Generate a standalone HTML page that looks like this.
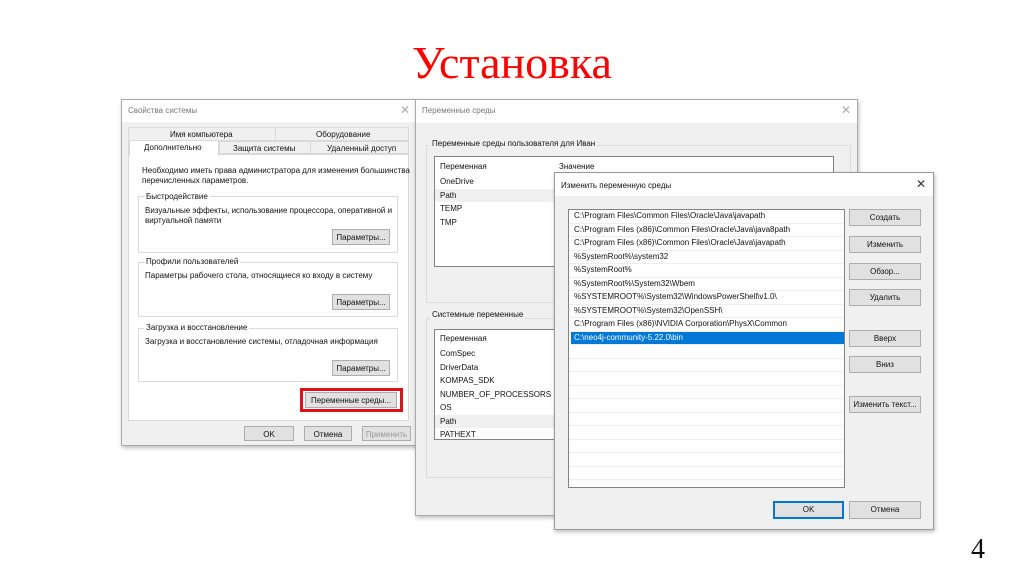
<!DOCTYPE html>
<html><head><meta charset="utf-8"><style>
*{margin:0;padding:0;box-sizing:border-box}
body{width:1024px;height:574px;background:#fff;position:relative;overflow:hidden;font-family:"Liberation Sans","DejaVu Sans",sans-serif;font-size:8px;color:#111}
.a{position:absolute}
.dlg{position:absolute;background:#f0f0f0;border:1px solid #aaa;box-shadow:1px 2px 4px rgba(0,0,0,.25)}
.tb{position:absolute;left:0;right:0;top:0;background:#fff}
.btn{position:absolute;background:#e1e1e1;border:1px solid #adadad;text-align:center;font-size:8px;line-height:15px}
.grp{position:absolute;border:1px solid #dcdcdc}
.lab{position:absolute;background:#f0f0f0;padding:0 2px;font-size:8px}
.list{position:absolute;background:#fff;border:1px solid #828282}
.x{position:absolute;font-size:12px;color:#555;font-weight:100}
</style></head><body>
<div class="a" style="left:0;width:1024px;top:36px;text-align:center;font-family:'Liberation Serif',serif;font-size:46px;color:#f00;line-height:54px">Установка</div>
<div class="a" style="left:971px;top:533px;font-family:'Liberation Serif',serif;font-size:28px;line-height:34px">4</div>

<!-- dialog 1 -->
<div class="dlg" style="left:121px;top:99px;width:297px;height:347px">
 <div class="tb" style="height:22px"><span class="a" style="left:6px;top:6px;color:#777">Свойства системы</span><span class="x" style="left:278px;top:3px;color:#aaa">✕</span></div>
 <div class="a" style="left:6px;top:27px;width:281px;height:14px;background:#f0f0f0;border:1px solid #d9d9d9"></div>
 <div class="a" style="left:153px;top:27px;width:1px;height:14px;background:#d9d9d9"></div>
 <span class="a" style="left:48px;top:30px">Имя компьютера</span>
 <span class="a" style="left:194px;top:30px">Оборудование</span>
 <div class="a" style="left:6px;top:41px;width:281px;height:13px;border:1px solid #d9d9d9;background:#f0f0f0"></div>
 <div class="a" style="left:97px;top:41px;width:1px;height:13px;background:#d9d9d9"></div>
 <div class="a" style="left:188px;top:41px;width:1px;height:13px;background:#d9d9d9"></div>
 <div class="a" style="left:6px;top:54px;width:281px;height:267px;background:#fff;border:1px solid #d9d9d9"></div>
 <div class="a" style="left:7px;top:40px;width:90px;height:16px;background:#fff;border:1px solid #d9d9d9;border-bottom:none"></div>
 <span class="a" style="left:22px;top:43px">Дополнительно</span>
 <span class="a" style="left:111px;top:44px">Защита системы</span>
 <span class="a" style="left:205px;top:44px">Удаленный доступ</span>
 <div class="a" style="left:20px;top:66px;width:275px;line-height:10px">Необходимо иметь права администратора для изменения большинства перечисленных параметров.</div>
 <div class="grp" style="left:16px;top:96px;width:260px;height:57px"></div>
 <span class="a" style="left:22px;top:92px;background:#fff;padding:0 2px">Быстродействие</span>
 <div class="a" style="left:23px;top:106px;width:252px;line-height:10px">Визуальные эффекты, использование процессора, оперативной и виртуальной памяти</div>
 <div class="btn" style="left:210px;top:129px;width:58px;height:16px">Параметры...</div>
 <div class="grp" style="left:16px;top:162px;width:260px;height:55px"></div>
 <span class="a" style="left:22px;top:157px;background:#fff;padding:0 2px">Профили пользователей</span>
 <div class="a" style="left:23px;top:171px">Параметры рабочего стола, относящиеся ко входу в систему</div>
 <div class="btn" style="left:210px;top:194px;width:58px;height:16px">Параметры...</div>
 <div class="grp" style="left:16px;top:228px;width:260px;height:54px"></div>
 <span class="a" style="left:22px;top:223px;background:#fff;padding:0 2px">Загрузка и восстановление</span>
 <div class="a" style="left:23px;top:237px">Загрузка и восстановление системы, отладочная информация</div>
 <div class="btn" style="left:210px;top:260px;width:58px;height:16px">Параметры...</div>
 <div class="a" style="left:178px;top:288px;width:103px;height:24px;border:3px solid #e0101a"></div>
 <div class="btn" style="left:183px;top:292px;width:92px;height:16px">Переменные среды...</div>
 <div class="btn" style="left:122px;top:326px;width:50px;height:15px">OK</div>
 <div class="btn" style="left:182px;top:326px;width:48px;height:15px">Отмена</div>
 <div class="btn" style="left:240px;top:326px;width:49px;height:15px;color:#999">Применить</div>
</div>

<!-- dialog 2 -->
<div class="dlg" style="left:415px;top:99px;width:443px;height:417px">
 <div class="tb" style="height:23px"><span class="a" style="left:6px;top:6px;color:#777">Переменные среды</span><span class="x" style="left:425px;top:3px;color:#aaa">✕</span></div>
 <div class="grp" style="left:10px;top:45px;width:425px;height:158px"></div>
 <span class="lab" style="left:14px;top:39px">Переменные среды пользователя для Иван</span>
 <div class="list" style="left:18px;top:56px;width:400px;height:111px">
  <span class="a" style="left:5px;top:5px">Переменная</span><span class="a" style="left:124px;top:5px">Значение</span>
  <span class="a" style="left:5px;top:20px">OneDrive</span>
  <div class="a" style="left:0;top:32px;width:398px;height:13px;background:#f0f0f0"></div>
  <span class="a" style="left:5px;top:34px">Path</span>
  <span class="a" style="left:5px;top:47px">TEMP</span>
  <span class="a" style="left:5px;top:61px">TMP</span>
 </div>
 <div class="grp" style="left:10px;top:218px;width:425px;height:160px"></div>
 <span class="lab" style="left:14px;top:210px">Системные переменные</span>
 <div class="list" style="left:18px;top:229px;width:400px;height:111px;overflow:hidden">
  <span class="a" style="left:5px;top:4px">Переменная</span>
  <span class="a" style="left:5px;top:19px">ComSpec</span>
  <span class="a" style="left:5px;top:33px">DriverData</span>
  <span class="a" style="left:5px;top:46px">KOMPAS_SDK</span>
  <span class="a" style="left:5px;top:60px">NUMBER_OF_PROCESSORS</span>
  <span class="a" style="left:5px;top:73px">OS</span>
  <div class="a" style="left:0;top:85px;width:398px;height:13px;background:#f0f0f0"></div>
  <span class="a" style="left:5px;top:87px">Path</span>
  <span class="a" style="left:5px;top:100px">PATHEXT</span>
 </div>
</div>

<!-- dialog 3 -->
<div class="dlg" style="left:554px;top:172px;width:380px;height:358px;border-color:#999">
 <div class="tb" style="height:23px"><span class="a" style="left:6px;top:8px">Изменить переменную среды</span><span class="x" style="left:361px;top:4px;color:#333">✕</span></div>
 <div class="list" style="left:13px;top:36px;width:277px;height:279px;overflow:hidden">
  <div style="position:absolute;left:0;top:0;width:275px;line-height:12.5px">
   <div style="padding-left:5px;border-bottom:1px solid #eee">C:\Program Files\Common Files\Oracle\Java\javapath</div>
   <div style="padding-left:5px;border-bottom:1px solid #eee">C:\Program Files (x86)\Common Files\Oracle\Java\java8path</div>
   <div style="padding-left:5px;border-bottom:1px solid #eee">C:\Program Files (x86)\Common Files\Oracle\Java\javapath</div>
   <div style="padding-left:5px;border-bottom:1px solid #eee">%SystemRoot%\system32</div>
   <div style="padding-left:5px;border-bottom:1px solid #eee">%SystemRoot%</div>
   <div style="padding-left:5px;border-bottom:1px solid #eee">%SystemRoot%\System32\Wbem</div>
   <div style="padding-left:5px;border-bottom:1px solid #eee">%SYSTEMROOT%\System32\WindowsPowerShell\v1.0\</div>
   <div style="padding-left:5px;border-bottom:1px solid #eee">%SYSTEMROOT%\System32\OpenSSH\</div>
   <div style="padding-left:5px;border-bottom:1px solid #eee">C:\Program Files (x86)\NVIDIA Corporation\PhysX\Common</div>
   <div style="padding-left:3px;margin-left:2px;background:#0078d7;color:#fff;border-bottom:1px solid #eee">C:\neo4j-community-5.22.0\bin</div>
   <div style="height:13.5px;border-bottom:1px solid #eee"></div><div style="height:13.5px;border-bottom:1px solid #eee"></div><div style="height:13.5px;border-bottom:1px solid #eee"></div><div style="height:13.5px;border-bottom:1px solid #eee"></div><div style="height:13.5px;border-bottom:1px solid #eee"></div><div style="height:13.5px;border-bottom:1px solid #eee"></div><div style="height:13.5px;border-bottom:1px solid #eee"></div><div style="height:13.5px;border-bottom:1px solid #eee"></div><div style="height:13.5px;border-bottom:1px solid #eee"></div><div style="height:13.5px;border-bottom:1px solid #eee"></div><div style="height:13.5px;border-bottom:1px solid #eee"></div>
  </div>
 </div>
 <div class="btn" style="left:294px;top:36px;width:72px;height:17px">Создать</div>
 <div class="btn" style="left:294px;top:63px;width:72px;height:17px">Изменить</div>
 <div class="btn" style="left:294px;top:90px;width:72px;height:17px">Обзор...</div>
 <div class="btn" style="left:294px;top:116px;width:72px;height:17px">Удалить</div>
 <div class="btn" style="left:294px;top:157px;width:72px;height:17px">Вверх</div>
 <div class="btn" style="left:294px;top:183px;width:72px;height:17px">Вниз</div>
 <div class="btn" style="left:294px;top:223px;width:72px;height:17px">Изменить текст...</div>
 <div class="btn" style="left:218px;top:328px;width:71px;height:18px;border:2px solid #0078d7;line-height:14px">OK</div>
 <div class="btn" style="left:294px;top:328px;width:72px;height:18px">Отмена</div>
</div>
</body></html>
